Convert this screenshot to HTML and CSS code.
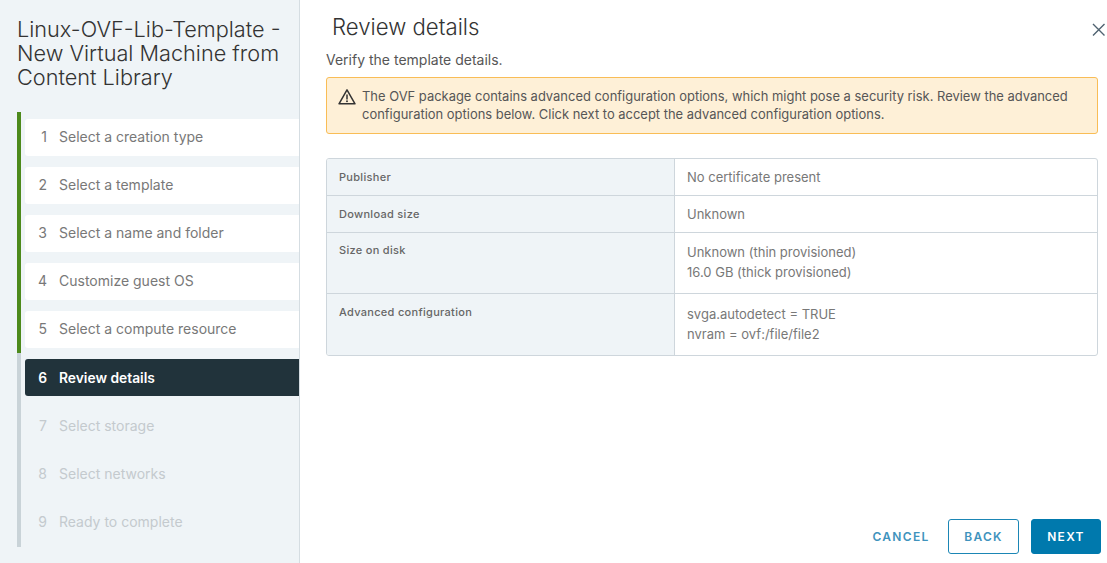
FILE: index.html
```html
<!DOCTYPE html>
<html lang="en">
<head>
<meta charset="utf-8">
<title>Review details</title>
<link rel="stylesheet" href="styles.css">
</head>
<body>
<div class="wizard">
  <aside class="side">
    <h1 class="side-title">Linux-OVF-Lib-Template - New Virtual Machine from Content Library</h1>
    <ol class="steps">
      <li class="step done"><span class="num">1</span><span>Select a creation type</span></li>
      <li class="step done"><span class="num">2</span><span>Select a template</span></li>
      <li class="step done"><span class="num">3</span><span>Select a name and folder</span></li>
      <li class="step done"><span class="num">4</span><span>Customize guest OS</span></li>
      <li class="step done"><span class="num">5</span><span>Select a compute resource</span></li>
      <li class="step current"><span class="num">6</span><span>Review details</span></li>
      <li class="step todo"><span class="num">7</span><span>Select storage</span></li>
      <li class="step todo"><span class="num">8</span><span>Select networks</span></li>
      <li class="step todo"><span class="num">9</span><span>Ready to complete</span></li>
    </ol>
  </aside>
  <main class="main">
    <header class="head">
      <h2 class="main-title">Review details</h2>
      <svg class="close" width="14" height="14" viewBox="0 0 14 14" aria-label="Close"><path d="M1 1 12.5 12.5M12.5 1 1 12.5" fill="none" stroke="#4f6270" stroke-width="1.4"/></svg>
    </header>
    <p class="sub">Verify the template details.</p>
    <div class="alert">
      <svg class="alert-icon" width="18" height="18" viewBox="0 0 18 18"><path d="M9 1.8 17 15.8H1Z" fill="none" stroke="#333" stroke-width="1.5" stroke-linejoin="round"/><path d="M9 6.6V11.4" stroke="#333" stroke-width="1.5"/><circle cx="9" cy="13.3" r=".95" fill="#333"/></svg>
      <p class="alert-text">The OVF package contains advanced configuration options, which might pose a security risk. Review the advanced configuration options below. Click next to accept the advanced configuration options.</p>
    </div>
    <div class="table">
      <div class="row short"><div class="key">Publisher</div><div class="val">No certificate present</div></div>
      <div class="row short"><div class="key">Download size</div><div class="val">Unknown</div></div>
      <div class="row tall"><div class="key">Size on disk</div><div class="val">Unknown (thin provisioned)<br>16.0 GB (thick provisioned)</div></div>
      <div class="row tall last"><div class="key">Advanced configuration</div><div class="val">svga.autodetect = TRUE<br>nvram = ovf:/file/file2</div></div>
    </div>
    <footer class="actions">
      <button class="btn link">CANCEL</button>
      <button class="btn outline">BACK</button>
      <button class="btn primary">NEXT</button>
    </footer>
  </main>
</div>
</body>
</html>
```
FILE: styles.css
```css
* { box-sizing: border-box; }
html, body { margin: 0; height: 100%; overflow: hidden; }
body { background: #fff; font-family: "Inter", "Noto Sans", sans-serif; color: #565656; }
.wizard { display: flex; height: 563px; }
.side { width: 300px; flex: none; background: #eff4f7; border-right: 1px solid #d5dde2; padding: 17px 0 0 17px; }
.side-title { margin: 0; width: 275px; font-size: 21.7px; font-weight: 300; line-height: 24px; color: #333; }
.steps { list-style: none; margin: 23px 0 0; padding: 7px 0 0 4px; width: 282px; height: 435px; display: flex; flex-direction: column; gap: 11px;
  border-left: 4px solid #c9d3d8; border-image: linear-gradient(#4d8a1c 0, #4d8a1c 241px, #c9d3d8 241px) 1; }
.step { height: 37px; flex: none; display: flex; align-items: center; font-size: 14px; border-radius: 3px 0 0 3px; width: 274px; }
.num { width: 34px; text-align: right; padding-right: 12px; flex: none; }
.done { background: #fff; color: #787878; padding-bottom: 2px; }
.current { background: #21333b; color: #fff; font-weight: 600; font-size: 13.8px; }
.todo { color: #c4cace; }
.main { flex: 1; min-width: 0; padding: 0 1px 0 26px; display: flex; flex-direction: column; }
.head { display: flex; justify-content: space-between; align-items: flex-start; height: 52px; padding-top: 14px; padding-left: 6px; }
.main-title { margin: 0; font-size: 22.2px; font-weight: 300; line-height: 26px; color: #333; }
.close { margin: 9px 0 0 0; }
.sub { margin: 0; font-size: 14px; line-height: 16px; color: #565656; }
.alert { margin: 9px 8px 0 0; height: 57px; background: #fef0d7; border: 1px solid #f9bd56; border-radius: 3px; display: flex; padding: 9px 16px 0 11px; gap: 6px; }
.alert-icon { flex: none; margin-top: 1px; }
.alert-text { margin: 0; font-size: 12.95px; line-height: 18px; color: #565656; }
.table { margin: 24px 8px 0 0; border: 1px solid #ced6dc; border-radius: 3px; overflow: hidden; }
.row { display: grid; grid-template-columns: 348px 1fr; border-bottom: 1px solid #ced6dc; }
.short { height: 37px; }
.tall { height: 61px; }
.last { border-bottom: 0; }
.key { background: #eff4f7; border-right: 1px solid #ced6dc; font-size: 11px; font-weight: 500; letter-spacing: .3px; padding: 11px 12px 0; line-height: 14px; color: #666; }
.val { font-size: 13px; line-height: 20px; padding: 8px 12px 0; color: #787878; }
.tall .key { padding-top: 10px; }
.tall .val { padding-top: 9px; }
.last .key { padding-top: 11px; }
.last .val { padding-top: 10px; }
.actions { margin-top: auto; height: 44px; padding-right: 5px; display: flex; justify-content: flex-end; align-items: flex-start; }
.btn { height: 35px; font: 600 12px "Inter", sans-serif; letter-spacing: 1.3px; border-radius: 3px; padding: 0; cursor: pointer; }
.link { width: 76px; background: none; border: 0; color: #3f93bd; margin-right: 9px; }
.outline { width: 71px; background: #fff; border: 1px solid #1b86b5; color: #3f93bd; margin-right: 12px; }
.primary { width: 70px; background: #0079ad; border: 1px solid #0079ad; color: #fff; }
```
